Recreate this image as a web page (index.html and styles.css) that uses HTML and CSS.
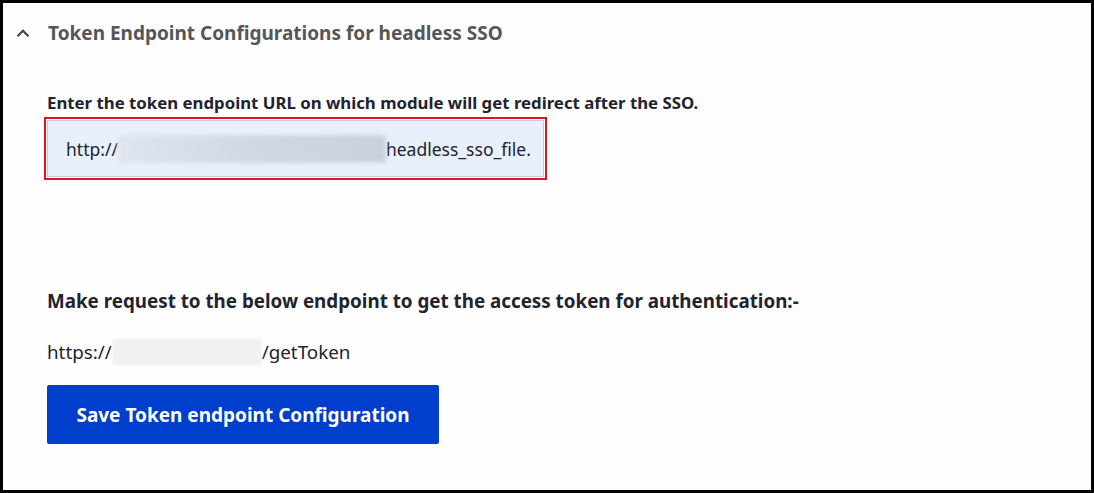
FILE: index.html
```html
<!DOCTYPE html>
<html>
<head>
<meta charset="utf-8">
<link rel="stylesheet" href="styles.css">
</head>
<body>
<div class="frame">
  <div class="summary">
    <svg class="chev" width="14" height="10" viewBox="0 0 14 10"><path d="M1.5 8.2 L7 2.7 L12.5 8.2" fill="none" stroke="#44454a" stroke-width="2.2"/></svg>
    <span class="summary-title">Token Endpoint Configurations for headless SSO</span>
  </div>
  <div class="content">
    <label class="label">Enter the token endpoint URL on which module will get redirect after the SSO.</label>
    <div class="input-wrap">
      <div class="input"><span>http://</span><span class="blur blur-a"></span><span>headless_sso_file.</span></div>
    </div>
    <p class="request">Make request to the below endpoint to get the access token for authentication:-</p>
    <p class="endpoint"><span>https://</span><span class="blur blur-b"></span><span>/getToken</span></p>
    <button class="btn">Save Token endpoint Configuration</button>
  </div>
</div>
</body>
</html>
```
FILE: styles.css
```css
html, body {
  margin: 0;
  padding: 0;
  background: #fff;
}
body {
  font-family: "Noto Sans", "Open Sans", sans-serif;
  color: #222330;
}
.frame {
  box-sizing: border-box;
  width: 1094px;
  height: 493px;
  border: 3px solid #000;
  background: #fefefe;
}
.summary {
  display: flex;
  align-items: center;
  height: 24px;
  margin-top: 18px;
  padding-left: 13px;
  gap: 18px;
}
.chev {
  display: block;
}
.summary-title {
  font-weight: 700;
  font-size: 19px;
  color: #55565b;
}
.content {
  padding-left: 44px;
  padding-top: 48px;
}
.label {
  display: block;
  font-weight: 700;
  font-size: 16.8px;
  line-height: 20px;
  color: #222330;
}
.input-wrap {
  margin-top: 4px;
  margin-left: -3px;
  width: 503px;
  height: 63px;
  box-sizing: border-box;
  border: 2px solid #e0141e;
  padding: 1px;
}
.input {
  box-sizing: border-box;
  height: 100%;
  border: 1px solid #c7cbd6;
  background: #e8f0fe;
  display: flex;
  align-items: center;
  padding-left: 18px;
  font-size: 17.5px;
  color: #222330;
}
.blur {
  display: inline-block;
  height: 28px;
  border-radius: 3px;
}
.blur-a {
  width: 268px;
  background: linear-gradient(90deg, #dfe5ef 0%, #d1d8e4 50%, #c9d1de 100%);
  filter: blur(2px);
}
.blur-b {
  width: 150px;
  height: 26px;
  background: #f1f1f1;
  filter: blur(1px);
}
.request {
  margin: 109px 0 0;
  font-weight: 700;
  font-size: 18.8px;
  line-height: 24px;
}
.endpoint {
  margin: 26px 0 0;
  display: flex;
  align-items: center;
  font-size: 18.8px;
  line-height: 26px;
}
.btn {
  margin-top: 20px;
  width: 392px;
  height: 59px;
  background: #003ecc;
  color: #fff;
  border: 0;
  border-radius: 2px;
  font-family: "Noto Sans", "Open Sans", sans-serif;
  font-weight: 700;
  font-size: 19px;
  cursor: pointer;
}
```
